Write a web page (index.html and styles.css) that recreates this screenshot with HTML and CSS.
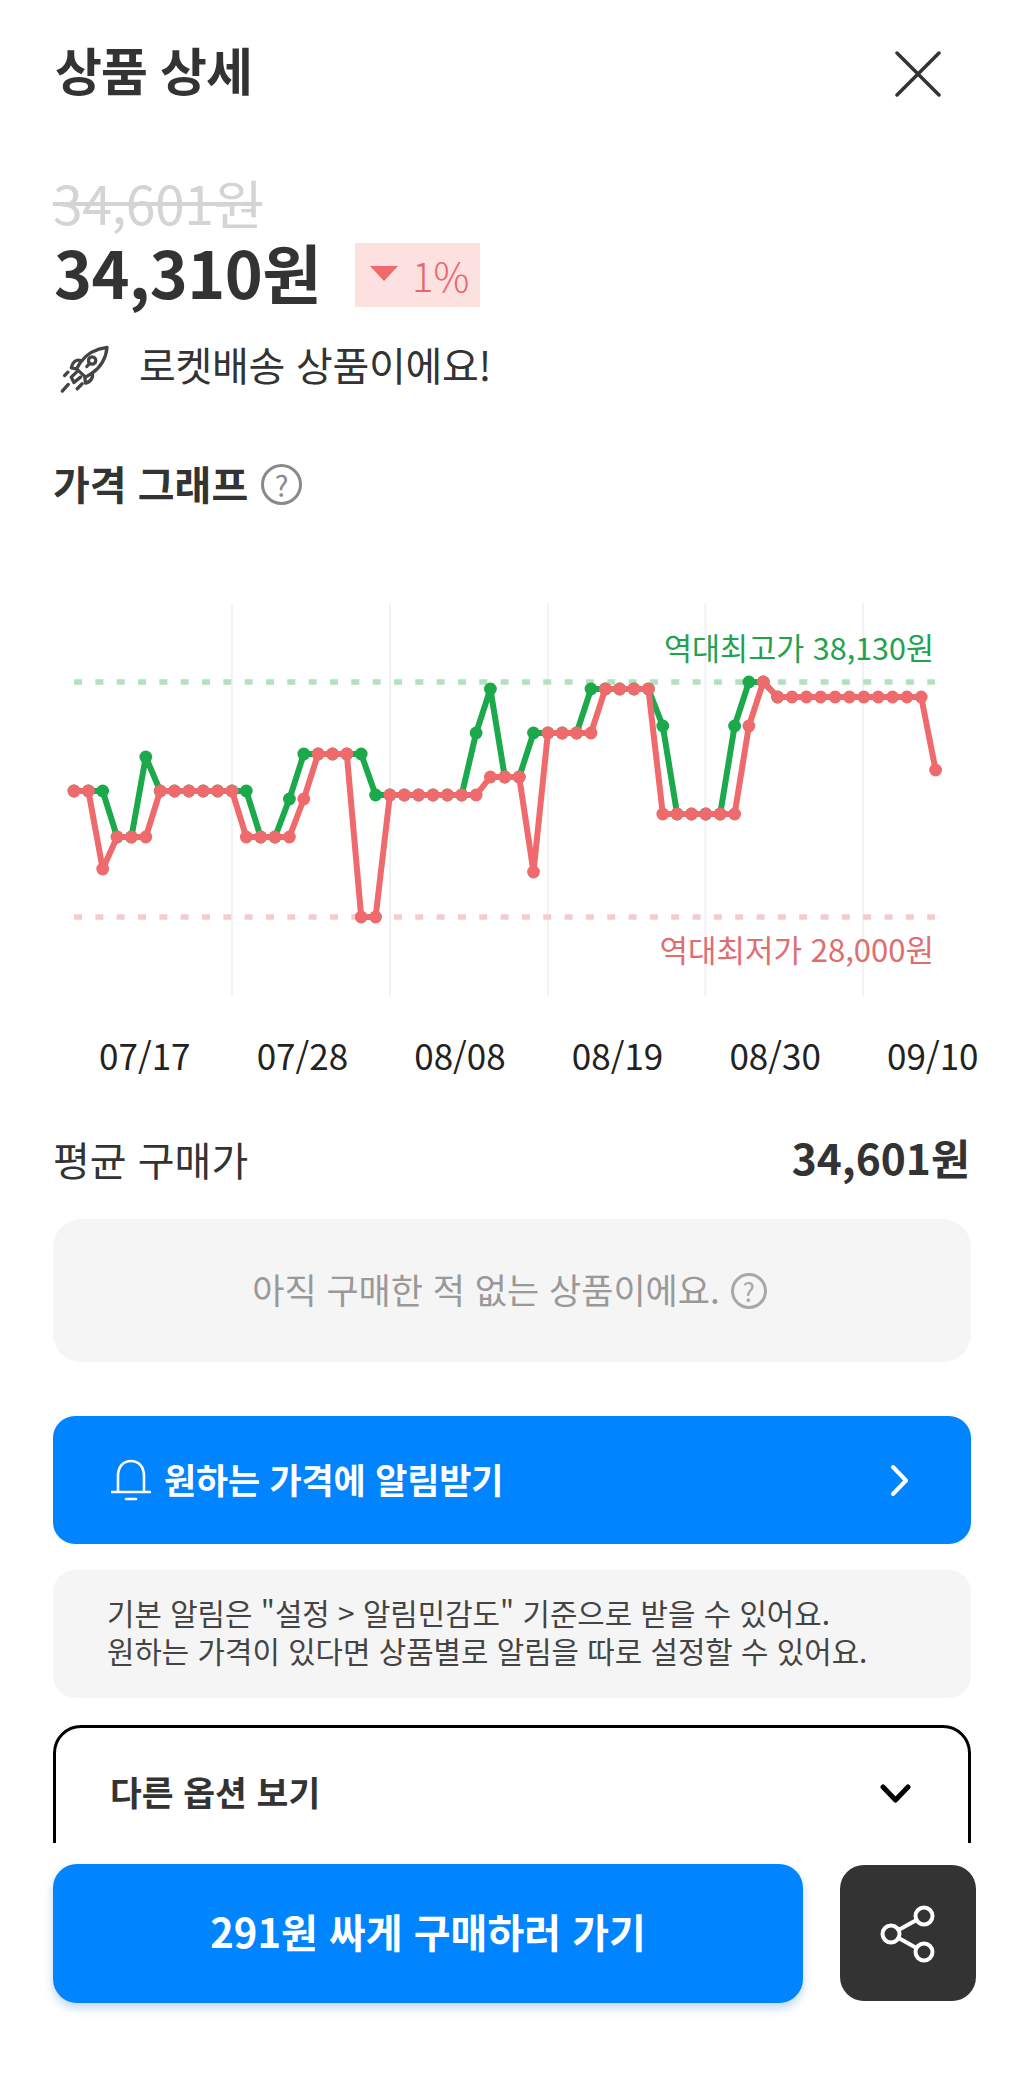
FILE: index.html
```html
<!DOCTYPE html>
<html lang="ko">
<head>
  <meta charset="UTF-8" />
  <meta name="viewport" content="width=device-width, initial-scale=1.0"/>
  <title>상품 상세</title>
  <link rel="stylesheet" href="styles.css">
</head>
<body>

<div class="screen">
  <div class="content">

    <!-- 헤더 -->
    <div class="header">
      <div class="header-title">상품 상세</div>
      <svg class="close-icon" viewBox="0 0 46 46"><path d="M2 2 L44 44 M44 2 L2 44"/></svg>
    </div>

    <!-- 가격 -->
    <div class="price-old">34,601원</div>
    <div class="price-row">
      <div class="price-now">34,310원</div>
      <div class="badge"><span class="badge-arrow"></span>1%</div>
    </div>
    <div class="rocket-row">
      <svg class="rocket-icon" viewBox="60 50 160 160">
        <path d="M205 60 C172 64 145 78 125 105 L113 125 L140 150 L160 138 C188 118 202 92 205 60Z"/>
        <circle cx="160" cy="100" r="11"/>
        <path d="M151 110 L144 118"/>
        <path d="M125 100 C112 95 100 105 97 122 L113 125"/>
        <path d="M160 138 C165 150 155 165 140 168 L138 150"/>
        <path d="M113 135 L97 150 L105 166 L125 150"/>
        <path d="M70 192 L88 172 M77 145 L87 135 M115 185 L130 170"/>
      </svg>
      <span>로켓배송 상품이에요!</span>
    </div>

    <!-- 그래프 -->
    <div class="section-title">
      <span class="section-text">가격 그래프</span>
      <span class="help help-lg">?</span>
    </div>

    <svg class="chart" viewBox="53 603 918 393">
      <defs>
        <marker id="dotGreen" markerUnits="userSpaceOnUse" markerWidth="14" markerHeight="14" refX="7" refY="7">
          <circle cx="7" cy="7" r="6.4" fill="#1ba94c"/>
        </marker>
        <marker id="dotRed" markerUnits="userSpaceOnUse" markerWidth="14" markerHeight="14" refX="7" refY="7">
          <circle cx="7" cy="7" r="6.4" fill="#ee6a6c"/>
        </marker>
      </defs>
      <path class="grid-line" d="M232 603 V996 M390 603 V996 M548 603 V996 M705.5 603 V996 M863 603 V996"/>
      <path class="limit limit-high" d="M74 682 H935"/>
      <path class="limit limit-low" d="M74 917 H935"/>
      <polyline class="series series-green" points="74,791 88.4,791 102.7,791 117.1,837 131.4,837 145.8,757 160.2,791 174.5,791 188.9,791 203.2,791 217.6,791 232,791 246.3,791 260.7,837 275,837 289.4,799 303.8,754 318.1,754 332.5,754 346.8,754 361.2,754 375.6,795 389.9,795 404.3,795 418.6,795 433,795 447.4,795 461.7,795 476.1,733 490.4,689 504.8,777 519.2,777 533.5,733 547.9,733 562.2,733 576.6,733 591,689 605.3,689 619.7,689 634,689 648.4,689 662.8,726 677.1,814 691.5,814 705.8,814 720.2,814 734.6,726 748.9,682 763.3,682 777.6,697"/>
      <polyline class="series series-red" points="74,791 88.4,791 102.7,869 117.1,837 131.4,837 145.8,837 160.2,791 174.5,791 188.9,791 203.2,791 217.6,791 232,791 246.3,837 260.7,837 275,837 289.4,837 303.8,799 318.1,754 332.5,754 346.8,754 361.2,917 375.6,917 389.9,795 404.3,795 418.6,795 433,795 447.4,795 461.7,795 476.1,795 490.4,777 504.8,777 519.2,777 533.5,872 547.9,733 562.2,733 576.6,733 591,733 605.3,689 619.7,689 634,689 648.4,689 662.8,814 677.1,814 691.5,814 705.8,814 720.2,814 734.6,814 748.9,726 763.3,682 777.6,697 792,697 806.4,697 820.7,697 835.1,697 849.4,697 863.8,697 878.2,697 892.5,697 906.9,697 921.2,697 935.6,770"/>
      <text class="chart-label label-high" x="934" y="660">역대최고가 38,130원</text>
      <text class="chart-label label-low" x="934" y="962">역대최저가 28,000원</text>
    </svg>

    <div class="dates">
      <span>07/17</span>
      <span>07/28</span>
      <span>08/08</span>
      <span>08/19</span>
      <span>08/30</span>
      <span>09/10</span>
    </div>

    <!-- 평균 구매가 -->
    <div class="avg-row">
      <span class="avg-label">평균 구매가</span>
      <span class="avg-price">34,601원</span>
    </div>
    <div class="empty-box">
      <span class="empty-text">아직 구매한 적 없는 상품이에요.</span>
      <span class="help help-sm">?</span>
    </div>

    <!-- 알림 -->
    <div class="alert-btn">
      <svg class="bell-icon" viewBox="0 0 40 42">
        <path d="M7 32 V17 C7 8 12 2 20 2 S33 8 33 17 V32"/>
        <path d="M1 33 H39"/>
        <path d="M15 40 H25"/>
      </svg>
      <span class="alert-text">원하는 가격에 알림받기</span>
      <svg class="chevron-right" viewBox="0 0 19 31"><path d="M3 2 L16 15.5 L3 29"/></svg>
    </div>
    <div class="note-box">
      기본 알림은 "설정 &gt; 알림민감도" 기준으로 받을 수 있어요.<br>
      원하는 가격이 있다면 상품별로 알림을 따로 설정할 수 있어요.
    </div>

    <!-- 옵션 -->
    <div class="option-box">
      <span>다른 옵션 보기</span>
      <svg class="chevron-down" viewBox="0 0 31 19"><path d="M3 3 L15.5 16 L28 3"/></svg>
    </div>
  </div>

  <!-- 하단 버튼 -->
  <div class="footer">
    <div class="buy-btn">291원 싸게 구매하러 가기</div>
    <div class="share-btn">
      <svg class="share-icon" viewBox="0 0 56 60">
        <circle cx="44" cy="12" r="8.5"/>
        <circle cx="11" cy="30" r="8.5"/>
        <circle cx="44" cy="48" r="8.5"/>
        <path d="M36.5 16 L18.5 26 M18.5 34 L36.5 44"/>
      </svg>
    </div>
  </div>
</div>

</body>
</html>
```

FILE: styles.css
```css
body {
  font-family: "Noto Sans CJK KR", sans-serif;
  margin: 0;
  padding: 0;
  background: #fff;
  color: #333;
}

.screen {
  width: 1024px;
  height: 2076px;
  display: flex;
  flex-direction: column;
  overflow: hidden;
}

.content {
  height: 1843px;
  padding: 0 53px;
  box-sizing: border-box;
  overflow: hidden;
  flex-shrink: 0;
}

/* 헤더 */
.header {
  height: 60px;
  margin-top: 44px;
  display: flex;
  align-items: center;
  justify-content: space-between;
  padding-right: 30px;
}

.header-title {
  font-size: 51px;
  font-weight: 700;
  letter-spacing: -1px;
  margin: 0 0 10px 2px;
  line-height: 60px;
}

.close-icon {
  width: 46px;
  height: 46px;
  fill: none;
  stroke: #333;
  stroke-width: 3.5px;
  stroke-linecap: round;
}

/* 가격 */
.price-old {
  height: 60px;
  line-height: 60px;
  margin-top: 68px;
  font-size: 53.5px;
  color: #d4d4d4;
  text-decoration: line-through;
  text-decoration-thickness: 4px;
  letter-spacing: -0.5px;
}

.price-row {
  height: 64px;
  margin-top: 11px;
  display: flex;
  align-items: center;
}

.price-now {
  width: 301px;
  font-size: 64.5px;
  font-weight: 700;
  line-height: 64px;
  margin: 0 0 8px 1px;
  letter-spacing: -0.5px;
}

.badge {
  width: 125px;
  height: 64px;
  background: #fde0e0;
  color: #e8686a;
  font-size: 40px;
  font-weight: 300;
  display: flex;
  align-items: center;
  gap: 14px;
  padding-left: 15px;
  box-sizing: border-box;
}

.badge-arrow {
  border-left: 14px solid transparent;
  border-right: 14px solid transparent;
  border-top: 15px solid #ee6a6c;
  margin-top: -4px;
}

.rocket-row {
  height: 50px;
  margin-top: 33px;
  display: flex;
  align-items: center;
  font-size: 40px;
  line-height: 50px;
  letter-spacing: -0.3px;
}

.rocket-row span {
  margin-bottom: 3px;
}

.rocket-icon {
  width: 53px;
  height: 53px;
  margin: 10px 27px 0 6px;
  fill: none;
  stroke: #444;
  stroke-width: 10px;
  stroke-linecap: round;
  stroke-linejoin: round;
  flex-shrink: 0;
}

.section-title {
  height: 50px;
  margin-top: 70px;
  display: flex;
  align-items: center;
  gap: 13px;
  font-size: 40px;
  font-weight: 700;
}

.section-text {
  margin-bottom: 4px;
  line-height: 50px;
}

.help {
  display: inline-flex;
  align-items: center;
  justify-content: center;
  border-radius: 50%;
  border-style: solid;
  box-sizing: border-box;
  font-weight: 400;
  line-height: 1;
}

.help-lg {
  width: 41px;
  height: 41px;
  border-width: 3px;
  border-color: #8a8a8a;
  color: #8a8a8a;
  font-size: 29px;
  margin-bottom: 2px;
}

.help-sm {
  width: 36px;
  height: 36px;
  border-width: 3px;
  border-color: #a8a8a8;
  color: #a8a8a8;
  font-size: 26px;
}

/* 그래프 */
.chart {
  display: block;
  width: 918px;
  height: 393px;
  margin-top: 93px;
}

.grid-line {
  stroke: #f2f2f2;
  stroke-width: 2px;
  fill: none;
}

.limit {
  fill: none;
  stroke-width: 5.5px;
  stroke-dasharray: 8 13.33;
}

.limit-high {
  stroke: #b5e0c0;
}

.limit-low {
  stroke: #f6cbce;
}

.series {
  fill: none;
  stroke-width: 6px;
  stroke-linejoin: round;
}

.series-green {
  stroke: #1ba94c;
  marker-start: url(#dotGreen);
  marker-mid: url(#dotGreen);
  marker-end: url(#dotGreen);
}

.series-red {
  stroke: #ee6a6c;
  marker-start: url(#dotRed);
  marker-mid: url(#dotRed);
  marker-end: url(#dotRed);
}

.chart-label {
  text-anchor: end;
}

.label-high {
  fill: #22a24e;
  font-size: 30.5px;
}

.label-low {
  fill: #e06d70;
  font-size: 31px;
}

.dates {
  height: 50px;
  margin: 33px 0 0 13px;
  display: grid;
  grid-template-columns: repeat(6, 157.6px);
  align-items: center;
  text-align: center;
  font-size: 35px;
  color: #222;
}

/* 평균 구매가 */
.avg-row {
  height: 50px;
  margin-top: 58px;
  display: flex;
  align-items: center;
  justify-content: space-between;
  padding-right: 1px;
}

.avg-label {
  font-size: 40px;
  line-height: 50px;
  margin-bottom: 6px;
}

.avg-price {
  font-size: 42.5px;
  font-weight: 700;
  line-height: 50px;
  margin-bottom: 10px;
}

.empty-box {
  height: 143px;
  margin-top: 32px;
  background: #f5f5f5;
  border-radius: 28px;
  display: flex;
  align-items: center;
  justify-content: center;
  gap: 11px;
  font-size: 35px;
  color: #999;
  padding-right: 5px;
  box-sizing: border-box;
}

.empty-text {
  margin-bottom: 4px;
}

/* 알림 */
.alert-btn {
  height: 128px;
  margin-top: 54px;
  background: #0084ff;
  border-radius: 22px;
  display: flex;
  align-items: center;
  padding: 0 62px 0 58px;
  color: #fff;
}

.bell-icon {
  width: 40px;
  height: 42px;
  fill: none;
  stroke: #fff;
  stroke-width: 2.6px;
  stroke-linecap: round;
  margin-right: 13px;
}

.alert-text {
  flex: 1;
  font-size: 35px;
  font-weight: 700;
  letter-spacing: -0.2px;
  margin-bottom: 4px;
}

.chevron-right {
  width: 19px;
  height: 31px;
  fill: none;
  stroke: #fff;
  stroke-width: 4px;
  stroke-linecap: round;
  stroke-linejoin: round;
}

.note-box {
  height: 128px;
  margin-top: 26px;
  background: #f5f5f5;
  border-radius: 22px;
  padding: 23px 0 0 54px;
  box-sizing: border-box;
  font-size: 29.8px;
  line-height: 38px;
  color: #444;
}

/* 옵션 */
.option-box {
  height: 150px;
  margin-top: 27px;
  border: 3px solid #000;
  border-radius: 28px;
  box-sizing: border-box;
  display: flex;
  justify-content: space-between;
  padding: 33px 57px 0 54px;
  font-size: 34.6px;
  font-weight: 700;
  line-height: 60px;
}

.chevron-down {
  width: 31px;
  height: 19px;
  margin-top: 23px;
  fill: none;
  stroke: #000;
  stroke-width: 5px;
  stroke-linecap: round;
  stroke-linejoin: round;
}

/* 하단 버튼 */
.footer {
  display: flex;
  align-items: flex-start;
  padding: 21px 0 0 53px;
  gap: 37px;
}

.buy-btn {
  width: 750px;
  height: 139px;
  line-height: 135px;
  background: #0084ff;
  border-radius: 24px;
  box-shadow: 0 5px 10px rgba(0, 100, 200, 0.25);
  color: #fff;
  font-size: 40px;
  font-weight: 700;
  text-align: center;
}

.share-btn {
  width: 136px;
  height: 136px;
  margin-top: 1px;
  background: #333;
  border-radius: 24px;
  display: flex;
  align-items: center;
  justify-content: center;
}

.share-icon {
  width: 56px;
  height: 60px;
  margin-top: 2px;
  fill: none;
  stroke: #fff;
  stroke-width: 4px;
}
```
